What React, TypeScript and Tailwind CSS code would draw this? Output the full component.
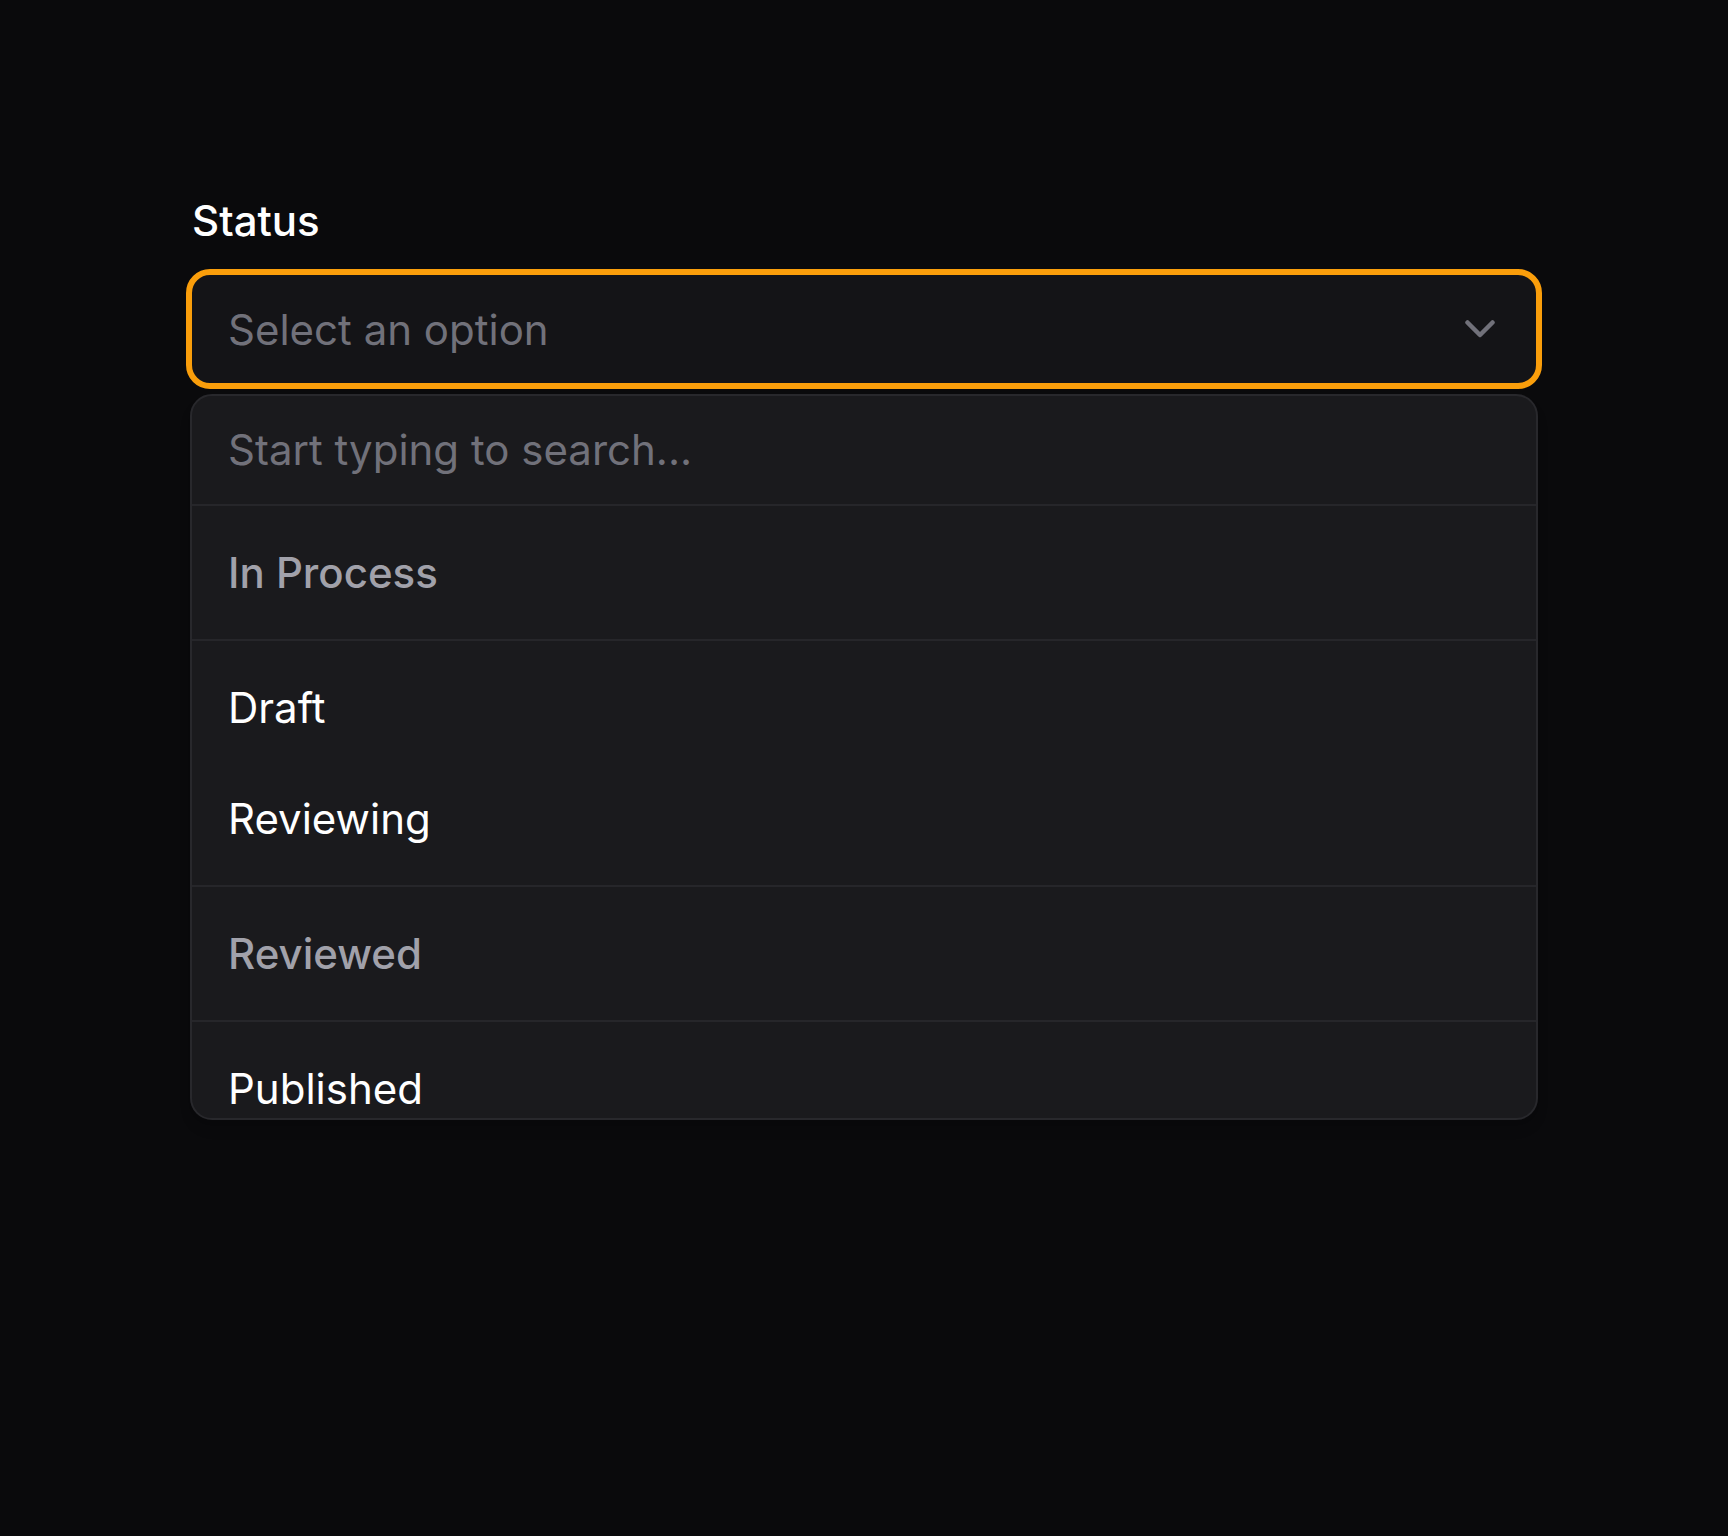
import React from "react";

type Group = { label: string; options: string[] };

const groups: Group[] = [
  { label: "In Process", options: ["Draft", "Reviewing"] },
  { label: "Reviewed", options: ["Published", "Archived"] },
];

const Chevron: React.FC = () => (
  <svg width="30" height="18" viewBox="0 0 30 18" fill="none" className="shrink-0">
    <path
      d="M2.5 2.5 15 15 27.5 2.5"
      stroke="#71717a"
      strokeWidth="4.5"
      strokeLinecap="round"
      strokeLinejoin="round"
    />
  </svg>
);

const App: React.FC = () => {
  return (
    <div className="min-h-screen bg-[#0a0a0c] font-['Inter','Noto_Sans',sans-serif]">
      <div className="px-[186px] pt-[191px]">
        <label className="block pl-[6px] text-[42px] leading-[60px] font-medium text-white">
          Status
        </label>

        <div className="mt-[18px]">
          <button className="flex h-[120px] w-full items-center justify-between rounded-[24px] border-[6px] border-[#fa9e0b] bg-[#141417] pl-[36px] pr-[41px] text-left">
            <span className="translate-y-[1px] text-[42px] leading-none text-[#71717a]">Select an option</span>
            <Chevron />
          </button>

          <div className="mx-[4px] mt-[5px] h-[726px] overflow-hidden rounded-[22px] border-2 border-[#28282c] bg-[#1a1a1d] shadow-lg">
            <div className="flex h-[110px] items-center border-b-2 border-[#26262a] pl-[36px]">
              <span className="text-[42px] leading-none text-[#71717a]">Start typing to search...</span>
            </div>

            {groups.map((group) => (
              <div key={group.label}>
                <div className="border-b-2 border-[#26262a] py-[11px]">
                  <div className="flex h-[111px] items-center pl-[36px]">
                    <span className="text-[42px] leading-none font-medium text-[#a1a1aa]">
                      {group.label}
                    </span>
                  </div>
                </div>
                <div className="border-b-2 border-[#26262a] py-[11px]">
                  {group.options.map((option) => (
                    <div key={option} className="flex h-[111px] items-center pl-[36px]">
                      <span className="text-[42px] leading-none text-white">{option}</span>
                    </div>
                  ))}
                </div>
              </div>
            ))}
          </div>
        </div>
      </div>
    </div>
  );
};

export default App;
